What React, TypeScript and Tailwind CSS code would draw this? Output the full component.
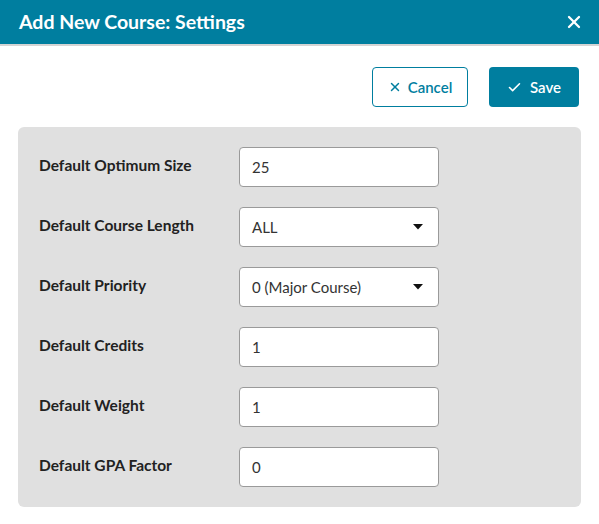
import { X, Check } from 'lucide-react';

const fields = [
  { label: 'Default Optimum Size', value: '25' },
  { label: 'Default Course Length', value: 'ALL', select: true },
  { label: 'Default Priority', value: '0 (Major Course)', select: true },
  { label: 'Default Credits', value: '1' },
  { label: 'Default Weight', value: '1' },
  { label: 'Default GPA Factor', value: '0' },
];

const App = () => {
  return (
    <div className="w-[599px] h-[524px] bg-white font-['Lato',sans-serif]">
      <div className="h-[46px] bg-[#007e9f] border-b-2 border-[#d4d4d4] flex items-center justify-between pl-[19px] pr-[15px]">
        <h1 className="text-white text-[19.5px] font-bold">Add New Course: Settings</h1>
        <X className="w-[20px] h-[20px] text-white" strokeWidth={2.75} />
      </div>

      <div className="flex justify-end gap-[21px] pt-[21px] pr-[20px]">
        <button className="w-[96px] h-[40px] border border-[#007e9f] rounded-[4px] text-[#007e9f] text-[15px] font-semibold flex items-center justify-center gap-[6px]">
          <X className="w-[14px] h-[14px]" strokeWidth={2.5} />
          Cancel
        </button>
        <button className="w-[90px] h-[40px] bg-[#007e9f] rounded-[4px] text-white text-[15px] font-semibold flex items-center justify-center gap-[8px]">
          <Check className="w-[15px] h-[15px]" strokeWidth={2.5} />
          Save
        </button>
      </div>

      <div className="mx-[18px] mt-[20px] bg-[#e0e0e0] rounded-[6px] px-[21px] py-[20px] flex flex-col gap-[20px]">
        {fields.map((f) => (
          <div key={f.label} className="flex items-center">
            <label className="w-[200px] text-[15.5px] font-bold text-[#222] -mt-[3px]">{f.label}</label>
            <div className="w-[200px] h-[40px] bg-white border border-[#9a9a9a] rounded-[4px] flex items-center justify-between pl-[12px] pr-[15px] text-[15px] text-[#333]">
              <span>{f.value}</span>
              {f.select && (
                <svg width="10" height="6" viewBox="0 0 10 6">
                  <path d="M0 0 L10 0 L5 5.5 Z" fill="#111" />
                </svg>
              )}
            </div>
          </div>
        ))}
      </div>
    </div>
  );
};

export default App;
